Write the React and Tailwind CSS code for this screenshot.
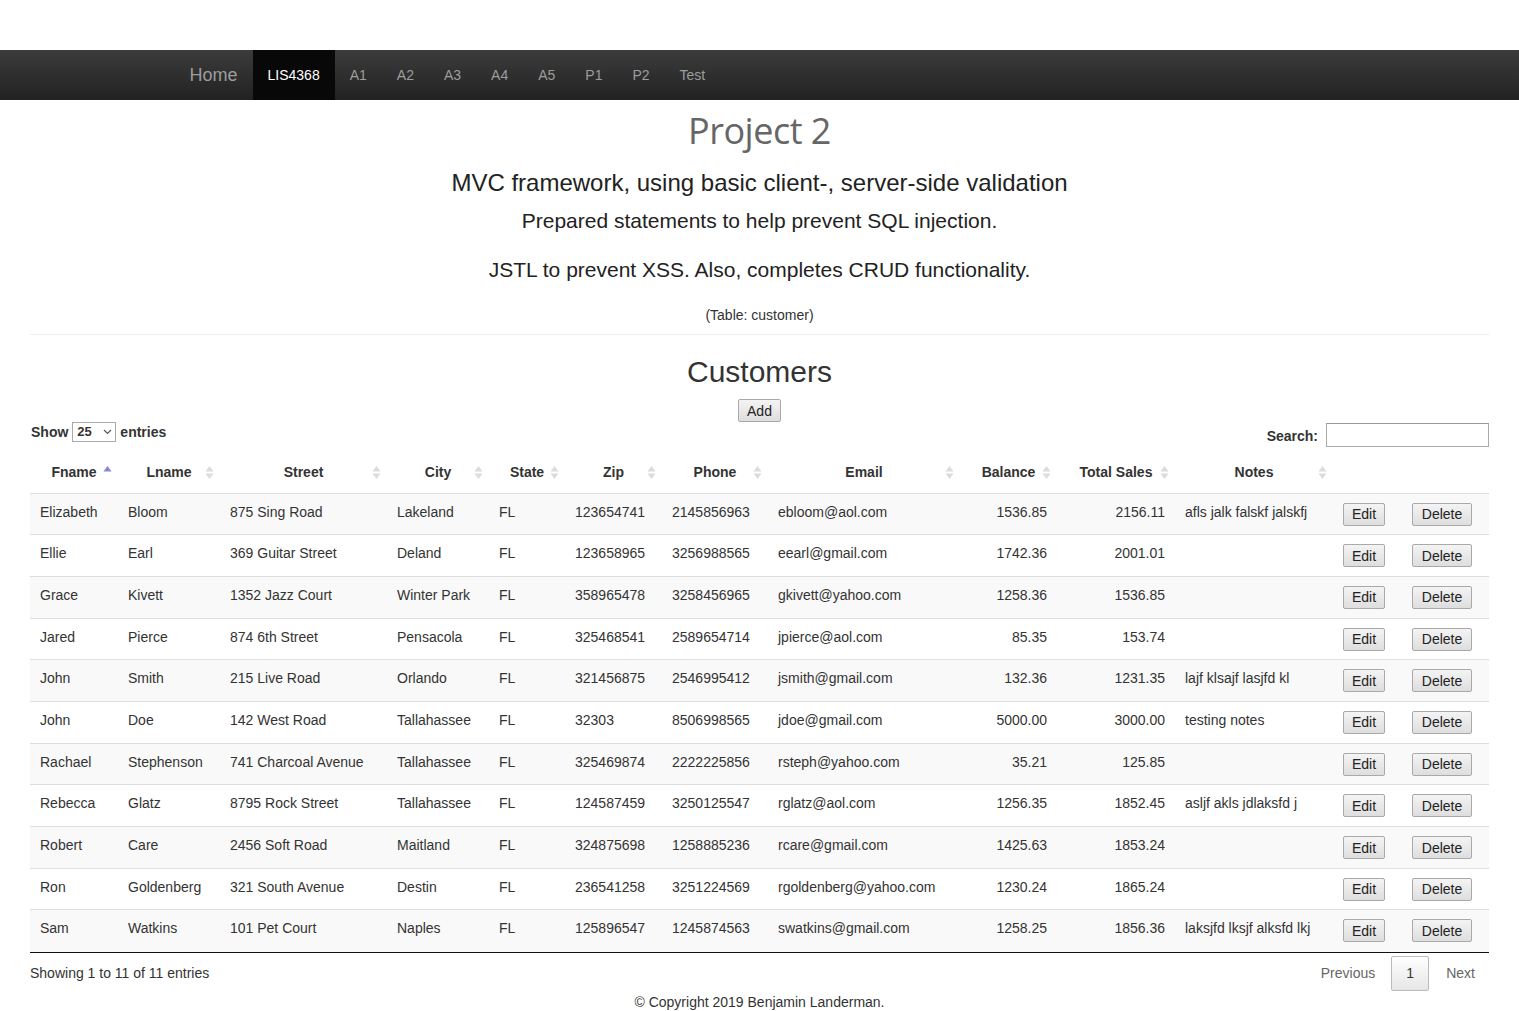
import React from "react";

const cols = [
  { key: "fname", label: "Fname", w: 88 },
  { key: "lname", label: "Lname", w: 102 },
  { key: "street", label: "Street", w: 167 },
  { key: "city", label: "City", w: 102 },
  { key: "state", label: "State", w: 76 },
  { key: "zip", label: "Zip", w: 97 },
  { key: "phone", label: "Phone", w: 106 },
  { key: "email", label: "Email", w: 192 },
  { key: "balance", label: "Balance", w: 97, right: true },
  { key: "sales", label: "Total Sales", w: 118, right: true },
  { key: "notes", label: "Notes", w: 158 },
];

const rows = [
  ["Elizabeth", "Bloom", "875 Sing Road", "Lakeland", "FL", "123654741", "2145856963", "ebloom@aol.com", "1536.85", "2156.11", "afls jalk falskf jalskfj"],
  ["Ellie", "Earl", "369 Guitar Street", "Deland", "FL", "123658965", "3256988565", "eearl@gmail.com", "1742.36", "2001.01", ""],
  ["Grace", "Kivett", "1352 Jazz Court", "Winter Park", "FL", "358965478", "3258456965", "gkivett@yahoo.com", "1258.36", "1536.85", ""],
  ["Jared", "Pierce", "874 6th Street", "Pensacola", "FL", "325468541", "2589654714", "jpierce@aol.com", "85.35", "153.74", ""],
  ["John", "Smith", "215 Live Road", "Orlando", "FL", "321456875", "2546995412", "jsmith@gmail.com", "132.36", "1231.35", "lajf klsajf lasjfd kl"],
  ["John", "Doe", "142 West Road", "Tallahassee", "FL", "32303", "8506998565", "jdoe@gmail.com", "5000.00", "3000.00", "testing notes"],
  ["Rachael", "Stephenson", "741 Charcoal Avenue", "Tallahassee", "FL", "325469874", "2222225856", "rsteph@yahoo.com", "35.21", "125.85", ""],
  ["Rebecca", "Glatz", "8795 Rock Street", "Tallahassee", "FL", "124587459", "3250125547", "rglatz@aol.com", "1256.35", "1852.45", "asljf akls jdlaksfd j"],
  ["Robert", "Care", "2456 Soft Road", "Maitland", "FL", "324875698", "1258885236", "rcare@gmail.com", "1425.63", "1853.24", ""],
  ["Ron", "Goldenberg", "321 South Avenue", "Destin", "FL", "236541258", "3251224569", "rgoldenberg@yahoo.com", "1230.24", "1865.24", ""],
  ["Sam", "Watkins", "101 Pet Court", "Naples", "FL", "125896547", "1245874563", "swatkins@gmail.com", "1258.25", "1856.36", "laksjfd lksjf alksfd lkj"],
];

function SortIcon({ active }) {
  return (
    <svg width="9" height="15" viewBox="0 0 9 15" className="absolute right-[6px] top-[13px]">
      <polygon points="4.5,1 8.5,6.5 0.5,6.5" fill={active ? "#8787d6" : "#dcdcdc"} />
      {!active && <polygon points="4.5,14 8.5,8.5 0.5,8.5" fill="#dcdcdc" />}
    </svg>
  );
}

function Btn({ children, w }) {
  return (
    <button
      className={`${w} h-[23px] border border-[#a9a9a9] rounded-[2px] bg-gradient-to-b from-[#f4f4f4] to-[#dedede] text-[14px] leading-[20px] text-[#222] flex items-center justify-center`}
    >
      {children}
    </button>
  );
}

const navItems = ["A1", "A2", "A3", "A4", "A5", "P1", "P2", "Test"];

export default function App() {
  return (
    <div className="bg-white text-[#333] text-[14px] leading-[20px] min-h-[1011px]" style={{ fontFamily: '"Liberation Sans", Arial, sans-serif' }}>
      <div className="h-[50px]" />
      <nav className="h-[50px] bg-gradient-to-b from-[#3c3c3c] to-[#222222]">
        <div className="w-[1170px] mx-auto flex h-full px-[15px]">
          <div className="flex items-center h-full text-[18px] text-[#9d9d9d] pr-[15px]">Home</div>
          <div className="flex items-center h-full bg-[#080808] text-white px-[15px]">LIS4368</div>
          {navItems.map((n) => (
            <div key={n} className="flex items-center h-full text-[#9d9d9d] px-[15px]">{n}</div>
          ))}
        </div>
      </nav>

      <div className="px-[30px]">
        <div className="text-center h-[62px] leading-[62px] text-[36px] text-[#666]" style={{ fontFamily: '"Open Sans", "Noto Sans", sans-serif', letterSpacing: "-0.5px" }}>
          Project 2
        </div>
        <div className="text-center h-[42px] leading-[42px] text-[24px] text-[#222]">
          MVC framework, using basic client-, server-side validation
        </div>
        <div className="text-center h-[34px] leading-[34px] text-[21px] text-[#222]">
          Prepared statements to help prevent SQL injection.
        </div>
        <div className="text-center h-[64px] leading-[64px] text-[21px] text-[#222]">
          JSTL to prevent XSS. Also, completes CRUD functionality.
        </div>
        <div className="text-center h-[26px] leading-[26px] text-[14px] text-[#333]">(Table: customer)</div>
        <div className="mt-[6px] border-t border-[#eeeeee]" />
        <div className="mt-[12px] text-center h-[50px] leading-[50px] text-[30px] text-[#333]">Customers</div>
        <div className="mt-[2px] flex justify-center">
          <Btn w="w-[43px]">Add</Btn>
        </div>

        <div className="flex justify-between h-[26px]">
          <div className="flex items-start font-bold text-[14px] pl-[1px]">
            <span className="leading-[20px]">Show</span>
            <div className="ml-[4px] w-[44px] h-[20px] border border-[#aaa] flex items-center justify-between pl-[4px] pr-[3px] font-bold">
              <span className="text-[13px]">25</span>
              <svg width="9" height="6" viewBox="0 0 9 6"><polyline points="1,1 4.5,4.5 8,1" fill="none" stroke="#555" strokeWidth="1.2" /></svg>
            </div>
            <span className="ml-[4px] leading-[20px]">entries</span>
          </div>
          <div className="flex items-start font-bold mt-[1px]">
            <span className="leading-[24px] mt-[1px]">Search:</span>
            <div className="ml-[8px] w-[163px] h-[24px] border border-[#aaa] border-t-[#999] bg-white" />
          </div>
        </div>

        <table className="mt-[4px] w-[1459px] table-fixed border-collapse">
          <colgroup>
            {cols.map((c) => (
              <col key={c.key} style={{ width: c.w }} />
            ))}
            <col style={{ width: 69 }} />
            <col style={{ width: 87 }} />
          </colgroup>
          <thead>
            <tr className="h-[41px] border-b border-[#ddd]">
              {cols.map((c, i) => (
                <th key={c.key} className="relative text-center font-bold px-[10px] whitespace-nowrap">
                  {c.label}
                  <SortIcon active={i === 0} />
                </th>
              ))}
              <th />
              <th />
            </tr>
          </thead>
          <tbody>
            {rows.map((r, ri) => (
              <tr key={ri} className={`h-[41.7px] ${ri % 2 === 0 ? "bg-[#f9f9f9]" : "bg-white"} ${ri > 0 ? "border-t border-[#ddd]" : ""}`}>
                {r.map((v, ci) => (
                  <td key={ci} className={`align-top pt-[8px] px-[10px] whitespace-nowrap overflow-hidden ${cols[ci].right ? "text-right" : "text-left"}`}>
                    {v}
                  </td>
                ))}
                <td className="align-top pt-[9px] pl-[10px]">
                  <Btn w="w-[42px]">Edit</Btn>
                </td>
                <td className="align-top pt-[9px] pl-[10px]">
                  <Btn w="w-[60px]">Delete</Btn>
                </td>
              </tr>
            ))}
          </tbody>
        </table>
        <div className="border-t border-[#111]" />

        <div className="flex justify-between">
          <div className="mt-[10px]">Showing 1 to 11 of 11 entries</div>
          <div className="flex items-start mt-[3px] mr-[14px]">
            <span className="leading-[35px] text-[#666] px-[16px]">Previous</span>
            <div className="w-[38px] h-[35px] border border-[#bbb] rounded-[2px] bg-gradient-to-b from-white to-[#e6e6e6] flex items-center justify-center text-[#333]">1</div>
            <span className="leading-[35px] text-[#666] pl-[17px]">Next</span>
          </div>
        </div>
        <div className="text-center h-[20px] leading-[20px] mt-[1px]">© Copyright 2019 Benjamin Landerman.</div>
      </div>
    </div>
  );
}
